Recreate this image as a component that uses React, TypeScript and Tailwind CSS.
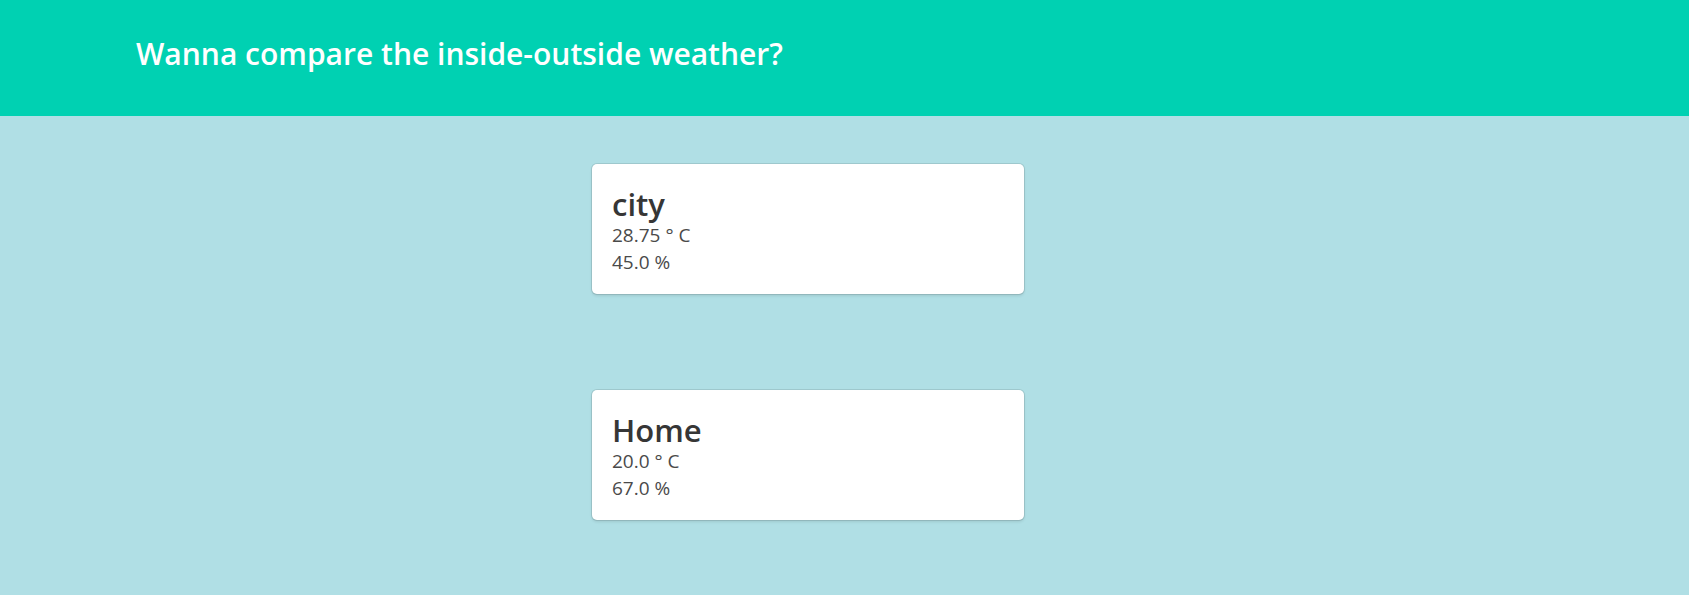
import React from 'react';

type Reading = {
  name: string;
  temp: string;
  humidity: string;
};

const readings: Reading[] = [
  { name: 'city', temp: '28.75', humidity: '45.0' },
  { name: 'Home', temp: '20.0', humidity: '67.0' },
];

const WeatherCard: React.FC<{ reading: Reading }> = ({ reading }) => (
  <div className="w-[432px] ml-[592px] bg-white rounded-[5px] shadow-[0_2px_3px_rgba(10,10,10,0.1),0_0_0_1px_rgba(10,10,10,0.1)] px-5 pt-[22px] pb-[18px]">
    <h2 className="text-[31px] leading-[36px] font-semibold text-[#363636]">{reading.name}</h2>
    <p className="text-[19px] leading-[27px] text-[#4a4a4a]">{reading.temp} ° C</p>
    <p className="text-[19px] leading-[27px] text-[#4a4a4a]">{reading.humidity} %</p>
  </div>
);

const App: React.FC = () => {
  return (
    <div className="min-h-screen bg-[#b0dfe5] font-['Open_Sans',sans-serif]">
      {/* Header */}
      <header className="h-[116px] bg-[#00d1b2] pt-[36px] pl-[136px]">
        <h1 className="text-[30px] leading-[36px] font-semibold text-white">
          Wanna compare the inside-outside weather?
        </h1>
      </header>

      {readings.map((r) => (
        <section key={r.name} className="py-12">
          <WeatherCard reading={r} />
        </section>
      ))}
    </div>
  );
};

export default App;
